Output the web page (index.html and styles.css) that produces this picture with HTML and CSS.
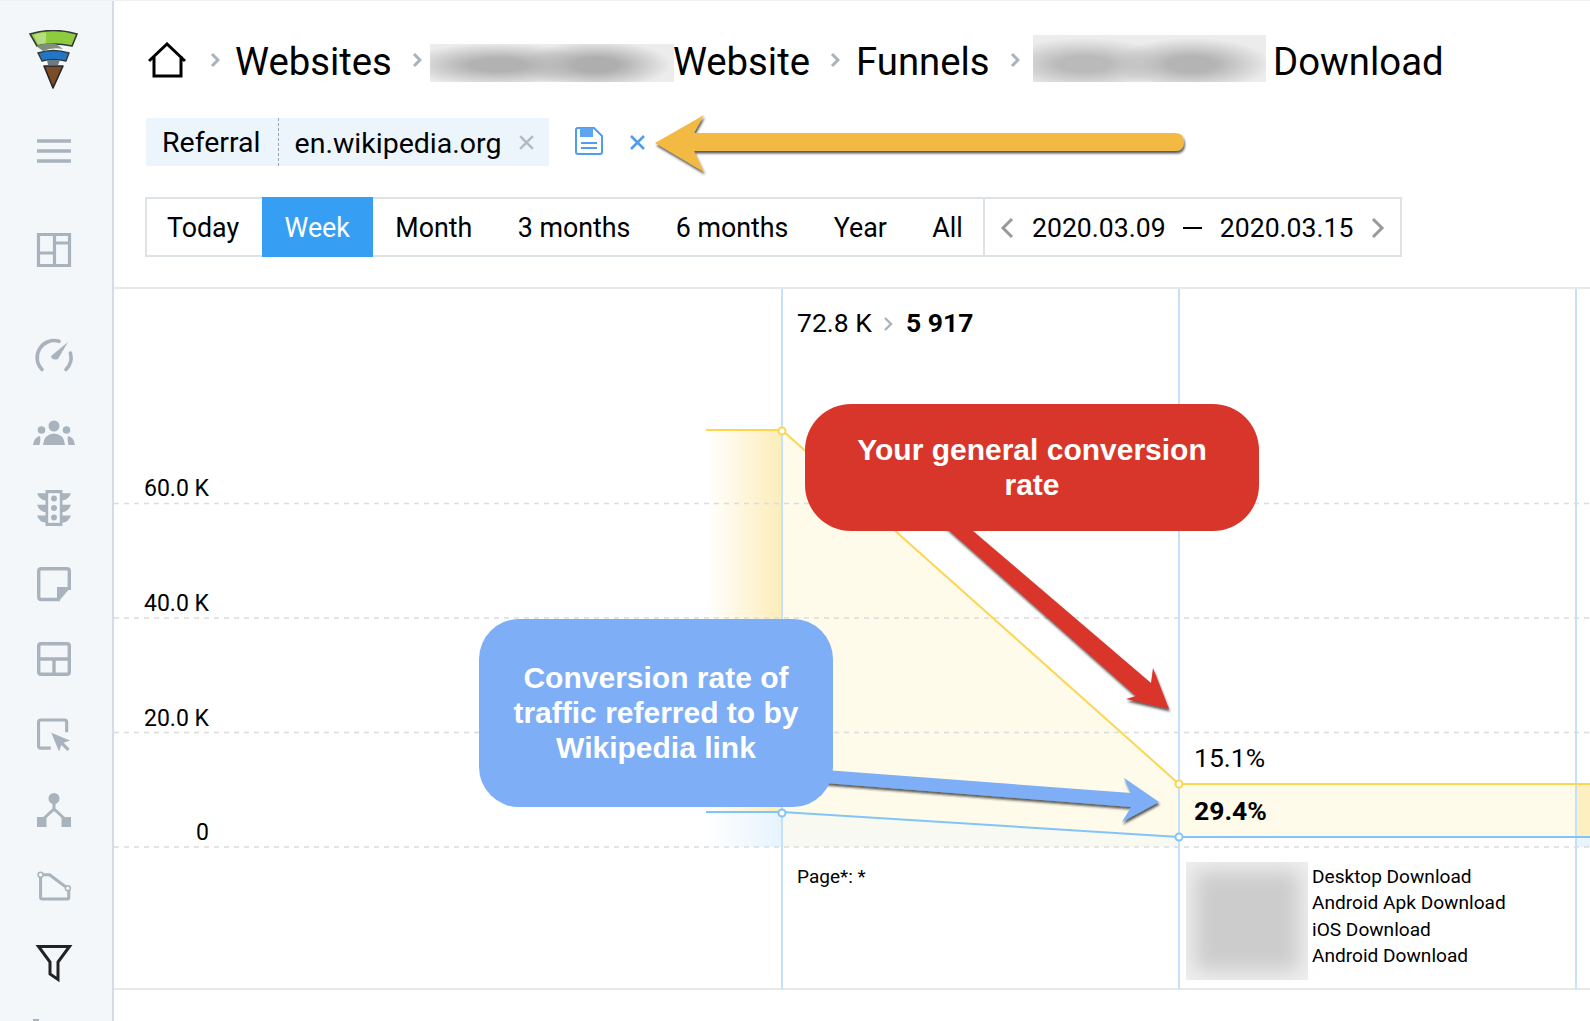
FILE: index.html
```html
<!DOCTYPE html>
<html lang="en">
<head>
  <meta charset="UTF-8" />
  <meta name="viewport" content="width=device-width, initial-scale=1.0" />
  <title>Funnel report</title>
  <link rel="stylesheet" href="styles.css">
</head>
<body>
  <aside class="sidebar">
    <svg class="logo" viewBox="29 31 50 60" width="50" height="60">
      <path d="M30 35 Q53 28 77 35 L72 47 Q53 43 37 47 Z" fill="#8fcb3f" stroke="#33393d" stroke-width="1.6"/>
      <path d="M34 36 Q38 34 46 33.500 L46 44 Q41 44.500 38 45.500 Z" fill="#b5dc80"/>
      <path d="M36 47 Q48 43 56 45 L63 50 Q52 48 43 52 Z" fill="#7f8f7c"/>
      <path d="M38 54 Q53 49 69 54 L66 62 Q53 59 42 62 Z" fill="#2276c4" stroke="#33393d" stroke-width="1.400"/>
      <path d="M47 61 L60 61 L58 66 L48 66 Z" fill="#6c7a85"/>
      <path d="M44 67 L63 67 L53 89 Z" fill="#7c4c26" stroke="#22262a" stroke-width="1.600" stroke-linejoin="round"/>
    </svg>

    <svg class="nav-icon nav-menu" viewBox="0 0 34 24"><path d="M0 2h34M0 12h34M0 22h34" fill="none" stroke="#a9b3bd" stroke-width="3.500"/></svg>

    <svg class="nav-icon nav-dash" viewBox="0 0 34 34"><path d="M1.500 1.500h31v31h-31zM17.500 1.500v31M1.500 20h16M17.500 10h15" fill="none" stroke="#a9b3bd" stroke-width="3.200"/></svg>

    <svg class="nav-icon nav-first" viewBox="0 0 40 34"><path d="M8 30.500A17 17 0 0 1 25 2.300M32 30.500A17 17 0 0 0 36.400 14" fill="none" stroke="#a9b3bd" stroke-width="3.600" stroke-linecap="round"/><path d="M34 3L24 20Q18 22 17 17Z" fill="#a9b3bd"/></svg>

    <svg class="nav-icon nav-wide" viewBox="0 0 42 26"><g fill="#a9b3bd"><circle cx="21" cy="6" r="5.500"/><path d="M10 25 Q11 14 21 13.500 Q31 14 32 25 Z"/><circle cx="8.500" cy="10" r="3.800"/><circle cx="33.500" cy="10" r="3.800"/><path d="M0 25 Q1 17 7 16 Q8 19 6.500 25 Z"/><path d="M42 25 Q41 17 35 16 Q34 19 35.500 25 Z"/></g></svg>

    <svg class="nav-icon" viewBox="0 0 32 34"><path d="M8 0h16v34H8zM0 3h8v7Q2 9 0 3zM32 3h-8v7Q30 9 32 3zM0 14h8v7Q2 20 0 14zM32 14h-8v7Q30 20 32 14zM0 24h8v7Q2 30 0 24zM32 24h-8v7Q30 30 32 24z" fill="#a9b3bd"/><g fill="#f4f7f9"><path d="M10.500 3h11v28h-11z"/></g><g fill="#a9b3bd"><circle cx="16" cy="8" r="2.800"/><circle cx="16" cy="17" r="2.800"/><circle cx="16" cy="26" r="2.800"/></g></svg>

    <svg class="nav-icon" viewBox="0 0 34 34"><path d="M23 32.500H4Q1.700 32.500 1.700 30V4Q1.700 1.700 4 1.700H30Q32.300 1.700 32.300 4V23" fill="none" stroke="#a9b3bd" stroke-width="3.400"/><path d="M20 20H34L22 34H20Z" fill="#a9b3bd"/></svg>

    <svg class="nav-icon" viewBox="0 0 34 34"><path d="M4 1.700H30Q32.300 1.700 32.300 4V30Q32.300 32.300 30 32.300H4Q1.700 32.300 1.700 30V4Q1.700 1.700 4 1.700ZM1.700 17H32.300M17 17V32.300" fill="none" stroke="#a9b3bd" stroke-width="3.400"/></svg>

    <svg class="nav-icon" viewBox="0 0 37 36"><path d="M15 32.300H4Q1.700 32.300 1.700 30V4Q1.700 1.700 4 1.700H30Q32.300 1.700 32.300 4V15" fill="none" stroke="#a9b3bd" stroke-width="3.400"/><path d="M15.500 15.500L36 24L29 26.500L35.500 33L33 35.500L26.500 29L24 36Z" fill="#a9b3bd"/></svg>

    <svg class="nav-icon" viewBox="0 0 34 34"><circle cx="17" cy="5.500" r="5.500" fill="#a9b3bd"/><path d="M17 9v7L5 27M17 16l12 11" fill="none" stroke="#a9b3bd" stroke-width="3"/><path d="M0 24h9.500v10H0zM24.500 24H34v10h-9.500z" fill="#a9b3bd"/></svg>

    <svg class="nav-icon" viewBox="0 0 38 33"><path d="M4 4V29Q4 31 6 31H34Q35.500 31 35.500 29V19L30 16 L14 4H6" fill="none" stroke="#a9b3bd" stroke-width="3.400"/><circle cx="4" cy="4" r="2.800" fill="#f4f7f9" stroke="#a9b3bd" stroke-width="1.600"/><circle cx="34.500" cy="19" r="2.800" fill="#f4f7f9" stroke="#a9b3bd" stroke-width="1.600"/></svg>

    <svg class="nav-icon nav-active" viewBox="0 0 34 36"><path d="M1.500 1.500H32.500L21 17V34.500L13 29V17Z" fill="none" stroke="#222" stroke-width="3"/></svg>

    <div class="nav-stub"></div>
  </aside>

  <main class="main">
    <nav class="breadcrumbs">
      <svg class="home" viewBox="0 0 38 36" width="38" height="36"><path d="M1 19L19 2L37 19M6 14V34H33V14" fill="none" stroke="#000" stroke-width="3"/></svg>
      <svg class="crumb-sep crumb-sep-first" viewBox="0 0 10 16"><path d="M2 2l6 6-6 6" fill="none" stroke="#aab3bc" stroke-width="3"/></svg>
      <span class="crumb">Websites</span>
      <svg class="crumb-sep" viewBox="0 0 10 16"><path d="M2 2l6 6-6 6" fill="none" stroke="#aab3bc" stroke-width="3"/></svg>
      <span class="redacted redacted-site"></span>
      <span class="crumb crumb-site">Website</span>
      <svg class="crumb-sep" viewBox="0 0 10 16"><path d="M2 2l6 6-6 6" fill="none" stroke="#aab3bc" stroke-width="3"/></svg>
      <span class="crumb crumb-funnels">Funnels</span>
      <svg class="crumb-sep" viewBox="0 0 10 16"><path d="M2 2l6 6-6 6" fill="none" stroke="#aab3bc" stroke-width="3"/></svg>
      <span class="redacted redacted-funnel"></span>
      <span class="crumb crumb-last">Download</span>
    </nav>

    <div class="filters">
      <div class="chip">
        <span class="chip-name">Referral</span>
        <span class="chip-value">en.wikipedia.org</span>
        <svg class="chip-close" viewBox="0 0 16 16" width="17" height="17"><path d="M2 2l12 12M14 2L2 14" stroke="#b5bbc1" stroke-width="2.400"/></svg>
      </div>
      <svg class="save" viewBox="0 0 28 28" width="28" height="28">
        <path d="M3 1h16l8 8v16q0 2-2 2H3q-2 0-2-2V3q0-2 2-2z" fill="#fff" stroke="#4f9cf0" stroke-width="2"/>
        <path d="M5 1h13v9H5z" fill="#5da5f1"/>
        <path d="M6 16h16M6 21h16" stroke="#4f9cf0" stroke-width="2"/>
      </svg>
      <svg class="clear" viewBox="0 0 17 17" width="17" height="17"><path d="M2 2l13 13M15 2L2 15" stroke="#4f9cf0" stroke-width="2.600"/></svg>
    </div>

    <div class="period">
      <span class="tab tab-first">Today</span>
      <span class="tab tab-on">Week</span>
      <span class="tab">Month</span>
      <span class="tab">3 months</span>
      <span class="tab">6 months</span>
      <span class="tab">Year</span>
      <span class="tab">All</span>
      <div class="range">
        <svg class="range-arrow" viewBox="0 0 14 22" width="14" height="22"><path d="M12 2L3 11l9 9" fill="none" stroke="#999" stroke-width="3"/></svg>
        <span>2020.03.09</span>
        <span class="range-dash"></span>
        <span>2020.03.15</span>
        <svg class="range-arrow" viewBox="0 0 14 22" width="14" height="22"><path d="M2 2l9 9-9 9" fill="none" stroke="#999" stroke-width="3"/></svg>
      </div>
    </div>

    <section class="chart">
      <svg class="chart-bg" viewBox="114 289 1476 700" width="1476" height="700">
        <defs>
          <linearGradient id="fadeYellow"><stop offset="0" stop-color="#fff"/><stop offset="1" stop-color="#fdedb9"/></linearGradient>
          <linearGradient id="fadeBlue"><stop offset="0" stop-color="#fff"/><stop offset="1" stop-color="#e6f3fd"/></linearGradient>
        </defs>
        <rect x="706" y="430" width="76" height="383" fill="url(#fadeYellow)"/>
        <rect x="706" y="813" width="76" height="34" fill="url(#fadeBlue)"/>
        <path d="M782 430L1179 784V847H782Z" fill="#fefbeb"/>
        <path d="M782 813L1179 837V847H782Z" fill="#f8f9f0"/>
        <rect x="1179" y="784" width="397" height="53" fill="#fefbeb"/>
        <rect x="1179" y="837" width="397" height="10" fill="#fff"/>
        <rect x="1576" y="784" width="14" height="53" fill="#fdefc0"/>
        <rect x="1576" y="837" width="14" height="10" fill="#e9f4fd"/>
        <g stroke="#dcdcdc" stroke-width="1.500" stroke-dasharray="5 5">
          <path d="M114 503.500H1590M114 618H1590M114 732.500H1590M114 847H1590"/>
        </g>
        <g stroke="#c5e1f9" stroke-width="2">
          <path d="M782 289V989M1179 289V989M1576 289V989"/>
        </g>
        <path d="M706 430H782L1179 784H1590" fill="none" stroke="#fdd651" stroke-width="2"/>
        <path d="M706 812H782L1179 837H1590" fill="none" stroke="#82c4fa" stroke-width="2"/>
        <g fill="#fff" stroke-width="2">
          <circle cx="782" cy="431" r="3.500" stroke="#fdd651"/>
          <circle cx="1179" cy="784" r="3.500" stroke="#fdd651"/>
          <circle cx="782" cy="813" r="3.500" stroke="#82c4fa"/>
          <circle cx="1179" cy="837" r="3.500" stroke="#82c4fa"/>
        </g>
      </svg>

      <div class="axis-label axis-60">60.0 K</div>
      <div class="axis-label axis-40">40.0 K</div>
      <div class="axis-label axis-20">20.0 K</div>
      <div class="axis-label axis-0">0</div>

      <div class="step-total">
        72.8 K
        <svg viewBox="0 0 10 16" width="10" height="16"><path d="M2 2l6 6-6 6" fill="none" stroke="#aab3bc" stroke-width="2.400"/></svg>
        <b>5 917</b>
      </div>
      <div class="step-page">Page*: *</div>

      <div class="rate rate-general">15.1%</div>
      <div class="rate rate-referred">29.4%</div>

      <div class="step-pages">
        <span class="redacted redacted-thumb"></span>
        <ul class="page-list">
          <li>Desktop Download</li>
          <li>Android Apk Download</li>
          <li>iOS Download</li>
          <li>Android Download</li>
        </ul>
      </div>
    </section>
  </main>

  <!-- annotations drawn on top of the screenshot -->
  <svg class="arrows" viewBox="0 0 1590 1021" width="1590" height="1021">
    <defs>
      <filter id="arrowShadow" x="-5%" y="-5%" width="110%" height="115%">
        <feDropShadow dx="1" dy="2.500" stdDeviation="1.200" flood-color="#222" flood-opacity="0.750"/>
      </filter>
    </defs>
    <path d="M655 143L704 115L694 133H1175Q1184 133 1184 142Q1184 151 1175 151H694L704 172Z" fill="#f2ba42" filter="url(#arrowShadow)"/>
    <path d="M943 525L966 525L1151 683L1153 668L1169 709L1126 699L1136 696Z" fill="#d9362b" filter="url(#arrowShadow)"/>
    <path d="M825 770L1131 793L1124 778L1159 802L1122 822L1131 807L825 783Z" fill="#7eaef5" filter="url(#arrowShadow)"/>
  </svg>

  <div class="callout callout-red">Your general conversion<br>rate</div>
  <div class="callout callout-blue">Conversion rate of<br>traffic referred to by<br>Wikipedia link</div>
</body>
</html>
```

FILE: styles.css
```css
* {
  box-sizing: border-box;
}
html, body {
  height: 100%;
}
body {
  margin: 0;
  display: flex;
  position: relative;
  overflow: hidden;
  background: #fff;
  color: #000;
  font-family: Roboto, "Liberation Sans", sans-serif;
  border-top: 1px solid #eef0f2;
  height: 1021px;
}

/* left rail */
.sidebar {
  width: 114px;
  flex: none;
  background: #f4f7f9;
  border-right: 2px solid #d5dce3;
  display: flex;
  flex-direction: column;
  align-items: center;
  padding: 29px 4px 0 0;
  position: relative;
}
.logo {
  display: block;
}
.nav-icon {
  display: block;
  width: 34px;
  height: 36px;
  margin-top: 39.600px;
  flex: none;
  overflow: visible;
}
.nav-menu {
  height: 24px;
  margin-top: 49px;
}
.nav-dash {
  height: 34px;
  margin-top: 70px;
}
.nav-first {
  width: 40px;
  margin-top: 71px;
}
.nav-wide {
  width: 42px;
  margin-top: 40.500px;
}
.nav-active {
  margin-top: 40.500px;
}
.nav-stub {
  position: absolute;
  left: 33px;
  bottom: 0;
  width: 6px;
  height: 2px;
  background: #a9b3bd;
}

.main {
  flex: 1;
  min-width: 0;
}

/* breadcrumbs */
.breadcrumbs {
  display: flex;
  align-items: center;
  height: 48px;
  margin-top: 33px;
  padding-left: 34px;
  font-size: 38.300px;
  white-space: nowrap;
}
.home {
  flex: none;
  margin-top: 4px;
}
.crumb-sep {
  width: 10px;
  height: 16px;
  flex: none;
  margin: 4px 15px 0 20px;
}
.crumb-sep-first {
  margin-left: 24px;
}
.redacted {
  display: block;
  flex: none;
  background-color: #ececec;
}
.redacted-site {
  width: 244px;
  height: 38px;
  margin-top: 10px;
  margin-left: -7px;
  background-image:
    radial-gradient(ellipse 95px 22px at 28% 55%, #b2b2b2 30%, rgba(178, 178, 178, 0)),
    radial-gradient(ellipse 75px 24px at 68% 55%, #aeaeae 30%, rgba(174, 174, 174, 0));
}
.redacted-funnel {
  width: 233px;
  height: 47px;
  margin-left: -2px;
  margin-top: 0;
  background-image:
    radial-gradient(ellipse 85px 26px at 22% 62%, #bababa 30%, rgba(186, 186, 186, 0)),
    radial-gradient(ellipse 80px 26px at 68% 62%, #b4b4b4 30%, rgba(180, 180, 180, 0));
}
.crumb {
  margin-top: 7px;
}
.crumb-site {
  margin-left: -1px;
}
.crumb-funnels {
  margin-left: 1px;
}
.crumb-last {
  margin-left: 7.500px;
}

/* filter row */
.filters {
  display: flex;
  align-items: center;
  margin: 36px 0 0 32px;
  height: 48px;
}
.chip {
  display: flex;
  align-items: center;
  width: 403px;
  height: 48px;
  background: #edf5fc;
  font-size: 28.500px;
}
.chip-name {
  padding: 2px 17px 0 16px;
  line-height: 46px;
  border-right: 1.500px dashed #9aa4ad;
}
.chip-value {
  padding: 2px 0 0 16px;
}
.chip-close {
  margin-left: 17px;
}
.save {
  margin-left: 26px;
  margin-top: -2px;
}
.clear {
  margin-left: 26px;
}

/* period selector */
.period {
  display: flex;
  align-items: stretch;
  width: 1257px;
  height: 60px;
  margin: 31px 0 0 31px;
  border: 2px solid #dde2e7;
  font-size: 26.800px;
  line-height: 58px;
}
.tab {
  padding: 0 22.700px;
  white-space: nowrap;
}
.tab-first {
  padding-left: 20px;
}
.tab-on {
  background: #379ff3;
  color: #fff;
  margin: -2px 0;
  padding-top: 2px;
}
.range {
  flex: 1;
  display: flex;
  align-items: center;
  justify-content: space-between;
  margin-left: -2px;
  padding: 2px 15px 0;
  border-left: 2px solid #dde2e7;
  font-size: 26.600px;
}
.range-dash {
  width: 19px;
  height: 2px;
  background: #000;
}

/* chart */
.chart {
  position: relative;
  height: 703px;
  margin-top: 30px;
  border-top: 2px solid #e6e8eb;
  border-bottom: 2px solid #e6e8eb;
}
.chart-bg {
  position: absolute;
  left: 0;
  top: 0;
  display: block;
}
.axis-label {
  position: absolute;
  right: 1381px;
  font-size: 23px;
  line-height: 28px;
}
.axis-60 { top: 186px; }
.axis-40 { top: 301px; }
.axis-20 { top: 416px; }
.axis-0 { top: 530px; }
.step-total {
  position: absolute;
  left: 683px;
  top: 18px;
  font-size: 26.500px;
  line-height: 32px;
  white-space: nowrap;
}
.step-total svg {
  margin: 0 6px 0 5px;
}
.step-page {
  position: absolute;
  left: 683px;
  top: 576px;
  font-size: 19px;
  line-height: 24px;
}
.rate {
  position: absolute;
  left: 1080px;
  font-size: 26.500px;
  line-height: 32px;
}
.rate-general { top: 453px; }
.rate-referred {
  top: 506px;
  font-weight: 700;
}
.step-pages {
  position: absolute;
  left: 1072px;
  top: 573px;
  display: flex;
}
.redacted-thumb {
  width: 122px;
  height: 118px;
  background: #cccccc;
  box-shadow: inset 0 0 20px 9px #efefef;
}
.page-list {
  list-style: none;
  margin: 0;
  padding: 2px 0 0 4px;
  font-size: 19.100px;
  line-height: 26.300px;
  white-space: nowrap;
}

/* annotations */
.arrows {
  position: absolute;
  left: 0;
  top: -1px;
  pointer-events: none;
}
.callout {
  position: absolute;
  display: flex;
  align-items: center;
  justify-content: center;
  text-align: center;
  color: #fff;
  font-family: "Liberation Sans", Arial, sans-serif;
  font-weight: 700;
  font-size: 30px;
  line-height: 35px;
  padding-bottom: 2px;
}
.callout-red {
  left: 805px;
  top: 403px;
  width: 454px;
  height: 127px;
  border-radius: 46px;
  background: #d9362b;
}
.callout-blue {
  left: 479px;
  top: 618px;
  width: 354px;
  height: 188px;
  border-radius: 40px;
  background: #7eaef5;
}
```
